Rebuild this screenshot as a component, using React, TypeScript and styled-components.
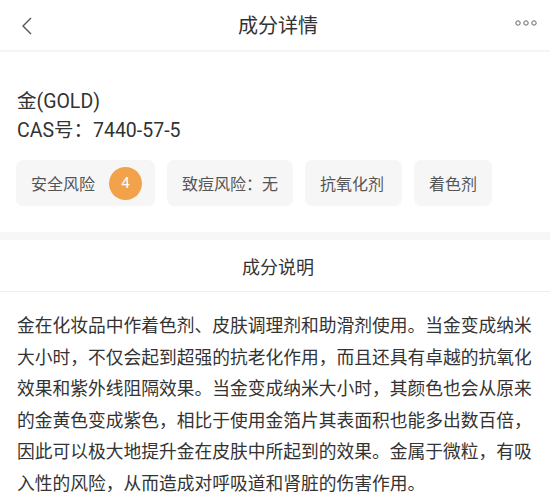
import React from "react";
import styled, { createGlobalStyle } from "styled-components";

const GlobalStyle = createGlobalStyle`
  html, body { margin: 0; padding: 0; background: #ffffff; }
  body { font-family: Roboto, "Noto Sans CJK SC", sans-serif; color: #333; }
`;

const Page = styled.div`
  width: 550px;
  height: 495px;
  overflow: hidden;
  background: #fff;
`;

const Header = styled.header`
  height: 50px;
  border-bottom: 2px solid #f5f5f5;
  display: grid;
  grid-template-columns: 60px 1fr 60px;
  align-items: center;
`;

const BackButton = styled.div`
  display: flex;
  align-items: center;
  padding-left: 20px;
  padding-top: 2px;
`;

const Title = styled.h1`
  margin: 0;
  text-align: center;
  font-size: 20px;
  font-weight: 400;
  color: #333;
  padding-left: 6px;
  line-height: 1;
  padding-top: 1px;
`;

const MoreButton = styled.div`
  display: flex;
  justify-content: flex-end;
  padding-right: 13px;
  padding-bottom: 4px;
`;

const Info = styled.section`
  padding: 35px 16px 26px 17px;
`;

const NameLine = styled.div`
  font-size: 19.5px;
  line-height: 29px;
  color: #333;
`;

const Tags = styled.div`
  display: flex;
  gap: 12px;
  margin-top: 15px;
  margin-left: -1px;
`;

const Tag = styled.div<{ $pr?: number }>`
  height: 46px;
  display: flex;
  align-items: center;
  padding: 0 ${(p) => p.$pr ?? 15}px 0 15px;
  background: #f6f6f6;
  border-radius: 7px;
  font-size: 16px;
  color: #555;
  font-family: "Noto Sans CJK SC", sans-serif;
`;

const Badge = styled.span`
  width: 33px;
  height: 33px;
  border-radius: 50%;
  background: #f3a24c;
  color: #fff;
  font-size: 15px;
  font-family: Roboto, sans-serif;
  display: flex;
  align-items: center;
  justify-content: center;
  margin-left: 14px;
`;

const Band = styled.div`
  height: 8px;
  background: #f7f7f7;
`;

const SectionHead = styled.h2`
  margin: 0;
  height: 51px;
  display: flex;
  align-items: center;
  justify-content: center;
  padding-left: 6px;
  font-size: 18px;
  font-weight: 400;
  color: #333;
  border-bottom: 1px solid #eeeeee;
  font-family: "Noto Sans CJK SC", sans-serif;
`;

const Body = styled.p`
  margin: 0;
  padding: 17px 16px 0 17px;
  font-size: 17.75px;
  line-height: 31.5px;
  color: #333;
  font-family: "Noto Sans CJK SC", sans-serif;
  word-break: break-all;
`;

export default function App() {
  return (
    <>
      <GlobalStyle />
      <Page>
        <Header>
          <BackButton>
            <svg width="14" height="20" viewBox="0 0 14 20">
              <polyline points="11,2 3,10 11,18" fill="none" stroke="#555" strokeWidth="1.4" />
            </svg>
          </BackButton>
          <Title>成分详情</Title>
          <MoreButton>
            <svg width="22" height="6" viewBox="0 0 22 6">
              <circle cx="3" cy="3" r="2.2" fill="none" stroke="#666" strokeWidth="1" />
              <circle cx="11" cy="3" r="2.2" fill="none" stroke="#666" strokeWidth="1" />
              <circle cx="19" cy="3" r="2.2" fill="none" stroke="#666" strokeWidth="1" />
            </svg>
          </MoreButton>
        </Header>
        <Info>
          <NameLine>金(GOLD)</NameLine>
          <NameLine>CAS号：7440-57-5</NameLine>
          <Tags>
            <Tag $pr={13}>
              安全风险<Badge>4</Badge>
            </Tag>
            <Tag>致痘风险：无</Tag>
            <Tag $pr={18}>抗氧化剂</Tag>
            <Tag>着色剂</Tag>
          </Tags>
        </Info>
        <Band />
        <SectionHead>成分说明</SectionHead>
        <Body>
          金在化妆品中作着色剂、皮肤调理剂和助滑剂使用。当金变成纳米大小时，不仅会起到超强的抗老化作用，而且还具有卓越的抗氧化效果和紫外线阻隔效果。当金变成纳米大小时，其颜色也会从原来的金黄色变成紫色，相比于使用金箔片其表面积也能多出数百倍，因此可以极大地提升金在皮肤中所起到的效果。金属于微粒，有吸入性的风险，从而造成对呼吸道和肾脏的伤害作用。
        </Body>
      </Page>
    </>
  );
}
